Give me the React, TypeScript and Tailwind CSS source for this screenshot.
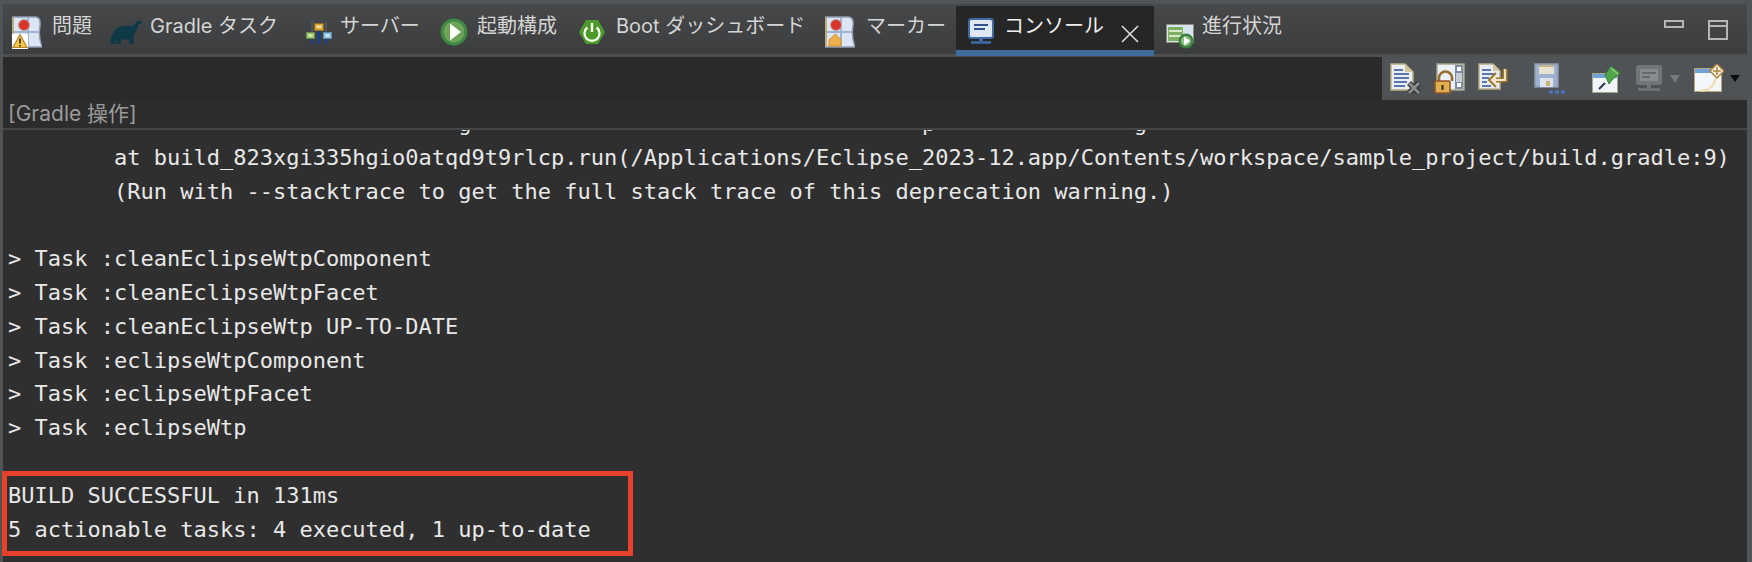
import React from "react";

const Paper = ({ children }: { children: React.ReactNode }) => (
  <svg width="30" height="33" viewBox="0 0 30 33" className="shrink-0">
    <path d="M1 1H24Q29 2 28 10Q26 20 30 31H1Z" fill="#dbe5f3" stroke="#8f9cb2" strokeWidth="1.5" />
    <path d="M1 1V31" stroke="#b9ae7c" strokeWidth="2" />
    <path d="M16 2V31M2 16H27" stroke="#9fb3d4" strokeWidth="2" />
    {children}
  </svg>
);

const ProblemIcon = () => (
  <Paper>
    <circle cx="12" cy="9" r="5.5" fill="#d8352c" stroke="#b9a9a0" />
    <rect x="0" y="18" width="16" height="15" fill="#fff" />
    <path d="M8 18.5L15 31.5H1Z" fill="#f5c649" stroke="#b6842c" strokeWidth="1.2" />
    <path d="M8 22.5V27.5M8 29V30.5" stroke="#33281a" strokeWidth="1.6" />
  </Paper>
);

const MarkerIcon = () => (
  <Paper>
    <circle cx="11" cy="9" r="5.5" fill="#d8352c" stroke="#b9a9a0" />
    <path d="M4 30V24L10.500 18L16 24V30Z" fill="#eeb04c" stroke="#d98d2d" />
  </Paper>
);

const Elephant = () => (
  <svg width="32" height="24" viewBox="0 0 32 24" className="shrink-0">
    <path
      d="M0.500 24C0 16 5 7 13 6C16 5.500 19 6 21 6C23 6 25 4.500 26 2.500C27 .8 30 0 32 1.500L31 4.500C29.500 3 28.500 4 28 6C27 10 25.500 13 24 14.500L23.500 24H19.500L18.500 19C16 20 13 20 11 19L10.500 24H7L6.500 20L5 24Z"
      fill="#0e3a47"
    />
  </svg>
);

const ServerIcon = () => (
  <svg width="28" height="23" viewBox="0 0 28 23" className="shrink-0">
    <path d="M7 0V23M21 0V23" stroke="#5c6270" strokeWidth="1.200" />
    <path d="M14 9V23" stroke="#1c3f88" strokeWidth="3" />
    <path d="M7 17V23M21 17V23" stroke="#1c3f88" strokeWidth="2.500" />
    <rect x="9.500" y="2.500" width="9" height="7" fill="#d9a637" stroke="#8f6a22" />
    <rect x="11.500" y="4.500" width="5" height="2.500" fill="#f4e2a8" />
    <rect x="1.500" y="11.500" width="8" height="6" fill="#9fca6b" stroke="#6b8d4f" />
    <rect x="3.500" y="13.500" width="4" height="2" fill="#e3f0c2" />
    <rect x="18.500" y="11.500" width="8" height="6" fill="#93c4e2" stroke="#5d8ca8" />
    <rect x="20.500" y="13.500" width="4" height="2" fill="#dcf0f8" />
  </svg>
);

const PlayIcon = () => (
  <svg width="28" height="28" viewBox="0 0 28 28" className="shrink-0">
    <circle cx="14" cy="14" r="13.500" fill="#3d8a42" />
    <circle cx="14" cy="14" r="10.500" fill="#6fa35c" />
    <path d="M10 5.500L21 14L10 22.500Z" fill="#fbfdf8" />
  </svg>
);

const BootIcon = () => (
  <svg width="26" height="26" viewBox="0 0 26 26" className="shrink-0">
    <path d="M7 1H19L26 13L19 25H7L0 13Z" fill="#4c9a2a" />
    <path d="M8.300 8.500A7.500 7.500 0 1 0 17.700 8.500" fill="none" stroke="#fff" strokeWidth="2.300" />
    <path d="M13 4V13" stroke="#fff" strokeWidth="2.300" />
  </svg>
);

const ConsoleIcon = () => (
  <svg width="26" height="26" viewBox="0 0 26 26" className="shrink-0">
    <rect x="1" y="1" width="24" height="19" rx="2.500" fill="#dfe7f3" stroke="#3f6ca8" strokeWidth="2" />
    <path d="M6 7H20M6 11H17" stroke="#2f5189" strokeWidth="2" />
    <path d="M6 15H18" stroke="#dfe7f3" strokeWidth="1" />
    <path d="M11 20H15V23H11Z" fill="#3f6ca8" />
    <path d="M3 24.500H23" stroke="#3f6ca8" strokeWidth="2.500" />
  </svg>
);

const ProgressIcon = () => (
  <svg width="28" height="25" viewBox="0 0 28 25" className="shrink-0">
    <rect x="0.500" y="0.500" width="27" height="18" fill="#d7e3ee" stroke="#8d8a78" />
    <rect x="2" y="3" width="15" height="14" fill="#7eae63" />
    <path d="M3 7H16M3 12H16" stroke="#d8ebc9" strokeWidth="2" />
    <circle cx="20" cy="17" r="7.500" fill="#37803f" />
    <circle cx="20" cy="17" r="5" fill="#8ebf86" />
    <path d="M18 12.500L24 17L18 21.500Z" fill="#fff" />
  </svg>
);

const ClearIcon = () => (
  <svg width="31" height="31" viewBox="0 0 31 31" className="shrink-0">
    <path d="M1 1H15L23 9V27H1Z" fill="#e9eef5" stroke="#b8ad84" strokeWidth="1.500" />
    <path d="M15 1V9H23Z" fill="#d2c59b" />
    <path d="M4 7H13M4 11H19M4 15H19M4 19H17M4 23H15" stroke="#5b76ad" strokeWidth="1.800" />
    <path d="M19 20L29 30M29 20L19 30" stroke="#2f2f2f" strokeWidth="5.500" />
    <path d="M19 20L29 30M29 20L19 30" stroke="#8c8c8c" strokeWidth="3" />
  </svg>
);

const LockIcon = () => (
  <svg width="31" height="31" viewBox="0 0 31 31" className="shrink-0">
    <rect x="3" y="1" width="27" height="26" fill="#e9f0f8" stroke="#a9a489" strokeWidth="1.500" />
    <rect x="21" y="2" width="8" height="24" fill="#7d8ba3" />
    <rect x="23" y="4" width="4" height="4" fill="#fff" />
    <rect x="22" y="10" width="6" height="9" fill="#c6ccd4" />
    <rect x="23" y="20" width="4" height="4" fill="#fff" />
    <path d="M5 18V15A6.500 6.500 0 0 1 18 15V18" fill="none" stroke="#9a6a2c" strokeWidth="2.500" />
    <rect x="1" y="18" width="15" height="12" rx="1" fill="#dfae4e" stroke="#96562a" strokeWidth="1.600" />
    <path d="M8.500 22V27" stroke="#3a2a12" strokeWidth="2" />
  </svg>
);

const WrapIcon = () => (
  <svg width="31" height="28" viewBox="0 0 31 28" className="shrink-0">
    <path d="M1 1H15L22 8V26H1Z" fill="#e9eef5" stroke="#b8ad84" strokeWidth="1.500" />
    <path d="M15 1V8H22Z" fill="#d2c59b" />
    <path d="M4 7H13M4 11H18M4 15H11M4 19H9M4 23H13" stroke="#5b76ad" strokeWidth="1.800" />
    <path d="M27 6V17H13" fill="none" stroke="#a5762c" strokeWidth="5" />
    <path d="M27 6V17H13" fill="none" stroke="#f7e9cf" strokeWidth="1.800" />
    <path d="M18 10L11 17L18 24" fill="#f7e9cf" stroke="#a5762c" strokeWidth="2" />
  </svg>
);

const SaveIcon = () => (
  <svg width="31" height="31" viewBox="0 0 31 31" className="shrink-0">
    <path d="M1 1H24V24H1Z" fill="#9db2d3" stroke="#8f99ad" strokeWidth="1.500" />
    <rect x="5" y="2" width="15" height="9" fill="#e7e1cf" />
    <rect x="5" y="2" width="15" height="2" fill="#c2b48a" />
    <rect x="6" y="15" width="13" height="9" fill="#dfe4ec" />
    <rect x="12" y="18" width="4" height="5" fill="#c8b37a" />
    <path d="M15 29H19M21 29H25M27 29H31" stroke="#4e74bd" strokeWidth="3" />
  </svg>
);

const PinIcon = () => (
  <svg width="29" height="28" viewBox="0 0 29 28" className="shrink-0">
    <rect x="0.500" y="8.500" width="25" height="19" fill="#f2f6fb" stroke="#a5a48c" />
    <rect x="1" y="9" width="24" height="4" fill="#6fa3d8" />
    <path d="M13 18L7 24" stroke="#25324a" strokeWidth="2" />
    <path d="M13 10L19 1L28 8L20 15L17 19Z" fill="#4fa548" stroke="#357f3a" />
    <path d="M19 3L26 9" stroke="#8ed07f" strokeWidth="1.500" />
  </svg>
);

const GrayMonitor = () => (
  <svg width="26" height="26" viewBox="0 0 26 26" className="shrink-0">
    <rect x="0" y="0" width="26" height="20" rx="2.500" fill="#727577" />
    <rect x="4" y="4" width="18" height="12" fill="#898c8e" />
    <path d="M6 8H20M6 12H14" stroke="#65686a" strokeWidth="1.800" />
    <path d="M11 20H15V23H11Z" fill="#727577" />
    <path d="M2 24.500H24" stroke="#727577" strokeWidth="2.500" />
  </svg>
);

const NewConsoleIcon = () => (
  <svg width="30" height="29" viewBox="0 0 30 29" className="shrink-0">
    <rect x="0.500" y="4.500" width="27" height="23" fill="#f3f6fb" stroke="#b4a878" />
    <rect x="1" y="5" width="26" height="4" fill="#6fa3d8" />
    <path d="M7 27Q18 27 22 14" fill="none" stroke="#efdca8" strokeWidth="2" />
    <path d="M23 0L30 7L23 14L16 7Z" fill="#fbf3df" stroke="#ae8340" strokeWidth="1.500" />
    <path d="M23 3V11M19 7H27" stroke="#ae8340" strokeWidth="1.500" />
  </svg>
);

const tabs = [
  { label: "問題", w: "w-[102px]", pl: "pl-[9px]", gap: "gap-[10px]", icon: <ProblemIcon /> },
  { label: "Gradle タスク", w: "w-[193px]", pl: "pl-[5px]", gap: "gap-[8px]", icon: <Elephant /> },
  { label: "サーバー", w: "w-[137px]", pl: "pl-[7px]", gap: "gap-[7px]", icon: <ServerIcon /> },
  { label: "起動構成", w: "w-[139px]", pl: "pl-[5px]", gap: "gap-[9px]", icon: <PlayIcon /> },
  { label: "Boot ダッシュボード", w: "w-[246px]", pl: "pl-[5px]", gap: "gap-[11px]", icon: <BootIcon /> },
  { label: "マーカー", w: "w-[136px]", pl: "pl-[5px]", gap: "gap-[11px]", icon: <MarkerIcon /> },
];

const Tab = ({ label, w, pl, gap, icon }: { label: string; w: string; pl: string; gap: string; icon: React.ReactNode }) => (
  <div className={`${w} ${pl} ${gap} flex h-full shrink-0 items-center`}>
    <div className="mt-[6px] shrink-0">{icon}</div>
    <span className="-mt-[6px] whitespace-nowrap text-[20px] leading-[26px] text-[#d4d4d4]">{label}</span>
  </div>
);

const lines = [
  "                                  g                                  p               g",
  "        at build_823xgi335hgio0atqd9t9rlcp.run(/Applications/Eclipse_2023-12.app/Contents/workspace/sample_project/build.gradle:9)",
  "        (Run with --stacktrace to get the full stack trace of this deprecation warning.)",
  " ",
  "> Task :cleanEclipseWtpComponent",
  "> Task :cleanEclipseWtpFacet",
  "> Task :cleanEclipseWtp UP-TO-DATE",
  "> Task :eclipseWtpComponent",
  "> Task :eclipseWtpFacet",
  "> Task :eclipseWtp",
  " ",
  "BUILD SUCCESSFUL in 131ms",
  "5 actionable tasks: 4 executed, 1 up-to-date",
];

export default function App() {
  return (
    <div className="relative flex h-[562px] w-[1752px] flex-col overflow-hidden bg-[#505457] pl-[3px] pr-[5px] pt-[4px] font-['Inter','Noto_Sans_CJK_JP',sans-serif]">
      <div className="flex h-[50px] shrink-0 items-stretch bg-gradient-to-b from-[#464849] to-[#3c3d3f]">
        <div className="flex h-full items-center">
          {tabs.map((t) => (
            <Tab key={t.label} {...t} />
          ))}
        </div>
        <div className="relative z-10 mt-[2px] flex h-[50px] w-[198px] shrink-0 flex-col border-b-[6px] border-[#3f6c9c] bg-[#262626]">
          <div className="flex h-full items-center pl-[12px]">
            <div className="mt-[6px] shrink-0">
              <ConsoleIcon />
            </div>
            <span className="-mt-[4px] ml-[10px] whitespace-nowrap text-[20px] leading-[26px] text-[#f0f0f0]">コンソール</span>
            <svg width="18" height="18" viewBox="0 0 18 18" className="ml-[17px] mt-[11px] shrink-0">
              <path d="M1 1L17 17M17 1L1 17" stroke="#dcdcdc" strokeWidth="1.600" />
            </svg>
          </div>
        </div>
        <div className="flex h-full flex-1 items-center pl-[12px]">
          <div className="mt-[14px]">
            <ProgressIcon />
          </div>
          <span className="-mt-[6px] ml-[8px] whitespace-nowrap text-[20px] leading-[26px] text-[#d4d4d4]">進行状況</span>
          <div className="ml-auto mr-[19px] mt-[2px] flex items-start gap-[24px]">
            <div className="h-[8px] w-[20px] border-2 border-[#b5b5b5]" />
            <div className="h-[20px] w-[20px] border-2 border-[#b5b5b5]">
              <div className="mt-[3px] h-[2px] bg-[#b5b5b5]" />
            </div>
          </div>
        </div>
      </div>

      <div className="h-[3px] shrink-0 bg-[#4d4f51]" />

      <div className="flex h-[43px] shrink-0 justify-end bg-[#2a2a2a]">
        <div className="flex w-[365px] items-center bg-[#4f5355] pl-[8px]">
          <ClearIcon />
          <div className="ml-[13px]"><LockIcon /></div>
          <div className="-mt-[3px] ml-[13px]"><WrapIcon /></div>
          <div className="ml-[25px]"><SaveIcon /></div>
          <div className="ml-[27px]"><PinIcon /></div>
          <div className="-mt-[2px] ml-[15px]"><GrayMonitor /></div>
          <svg width="10" height="8" viewBox="0 0 10 8" className="ml-[8px] shrink-0">
            <path d="M0 0H10L5 8Z" fill="#77797b" />
          </svg>
          <div className="ml-[14px]"><NewConsoleIcon /></div>
          <svg width="10" height="7" viewBox="0 0 10 7" className="ml-[6px] shrink-0">
            <path d="M0 0H10L5 7Z" fill="#0b0b0b" />
          </svg>
        </div>
      </div>

      <div className="flex h-[28px] shrink-0 items-center bg-[#2c2c2c] pl-[5px]">
        <span className="whitespace-nowrap text-[21px] leading-[28px] text-[#9b9b9b]">[Gradle 操作]</span>
      </div>

      <div className="h-[2px] shrink-0 bg-[#434547]" />

      <div className="min-h-0 flex-1 overflow-hidden bg-[#2f2f2f] pl-[5px] font-['DejaVu_Sans_Mono',monospace] text-[22px] leading-[33.8px] text-[#e8e8e8]">
        <div className="-mt-[23px]">
          {lines.map((l, i) => (
            <div key={i} className="h-[33.8px] whitespace-pre">
              {l}
            </div>
          ))}
        </div>
      </div>

      <div className="absolute left-[2px] top-[471px] h-[85px] w-[631px] border-[5px] border-[#e8412a]" />
    </div>
  );
}
